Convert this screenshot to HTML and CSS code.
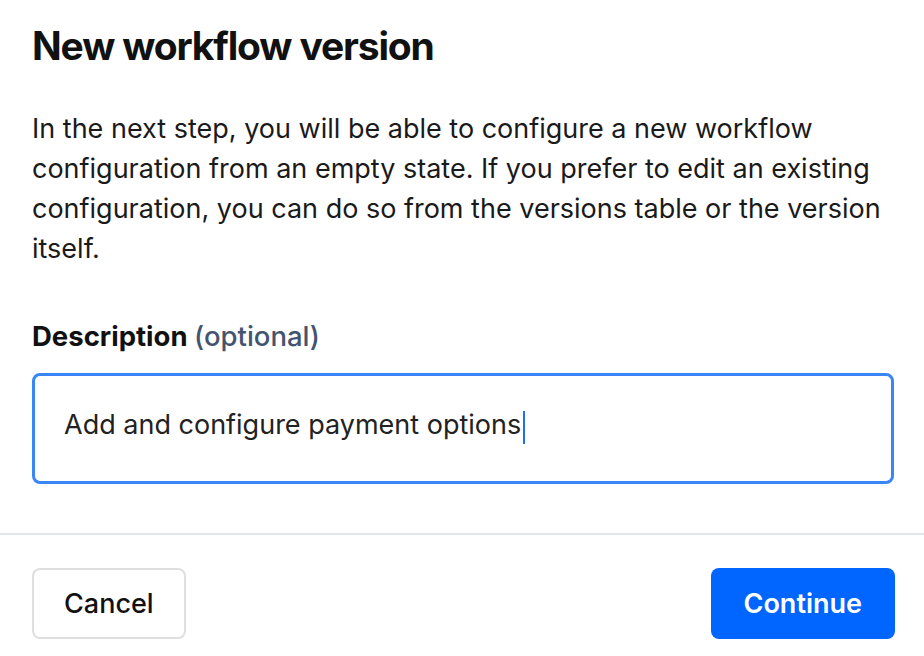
FILE: index.html
```html
<!DOCTYPE html>
<html lang="en">
<head>
    <meta charset="UTF-8">
    <meta name="viewport" content="width=device-width, initial-scale=1.0">
    <title>New workflow version</title>
    <link rel="stylesheet" href="styles.css">
</head>
<body>

<div class="modal">
    <div class="modal-body">
        <h1 class="modal-title">New workflow version</h1>
        <p class="modal-text">In the next step, you will be able to configure a new workflow configuration from an empty state. If you prefer to edit an existing configuration, you can do so from the versions table or the version itself.</p>

        <label class="field-label" for="description">Description <span class="optional">(optional)</span></label>
        <div class="field-input" id="description">Add and configure payment options<span class="caret"></span></div>
    </div>

    <!-- Footer: cancel on the left, continue on the right -->
    <div class="modal-footer">
        <button class="button cancel">Cancel</button>
        <button class="button primary">Continue</button>
    </div>
</div>

</body>
</html>
```

FILE: styles.css
```css
body {
    font-family: Inter, "Noto Sans", sans-serif;
    margin: 0;
    background-color: #ffffff;
    color: #111111;
}

.modal {
    width: 924px;
}

.modal-body {
    padding: 22px 30px 49px 32px;
}

.modal-title {
    font-size: 39px;
    font-weight: 700;
    line-height: 48px;
    margin: 0 0 39px 0;
    letter-spacing: -1.15px;
}

.modal-text {
    font-size: 27px;
    line-height: 40px;
    margin: 0 0 47px 0;
    color: #1a1a1a;
}

.field-label {
    display: block;
    font-size: 27.5px;
    font-weight: 700;
    line-height: 40px;
    margin-bottom: 17px;
}

.optional {
    font-weight: 500;
    color: #44546f;
}

.field-input {
    height: 111px;
    box-sizing: border-box;
    border: 3px solid #3a85f7;
    border-radius: 8px;
    padding: 0 29px 8px 29px;
    display: flex;
    align-items: center;
    font-size: 27px;
    color: #222222;
}

.caret {
    display: inline-block;
    width: 2px;
    height: 33px;
    margin-left: 2px;
    margin-top: 6px;
    background-color: #1f6ff5;
}

.modal-footer {
    border-top: 2px solid #e2e5ec;
    padding: 33px 29px 0 32px;
    display: flex;
    justify-content: space-between;
}

.button {
    font-family: Inter, "Noto Sans", sans-serif;
    font-size: 27px;
    height: 71px;
    border-radius: 8px;
    cursor: pointer;
}

.button.cancel {
    background-color: #ffffff;
    border: 2px solid #dfdfdf;
    color: #111111;
    font-weight: 500;
    padding: 0 30px;
}

.button.primary {
    background-color: #0066ff;
    border: none;
    color: #ffffff;
    font-weight: 600;
    padding: 0 33px;
}
```
